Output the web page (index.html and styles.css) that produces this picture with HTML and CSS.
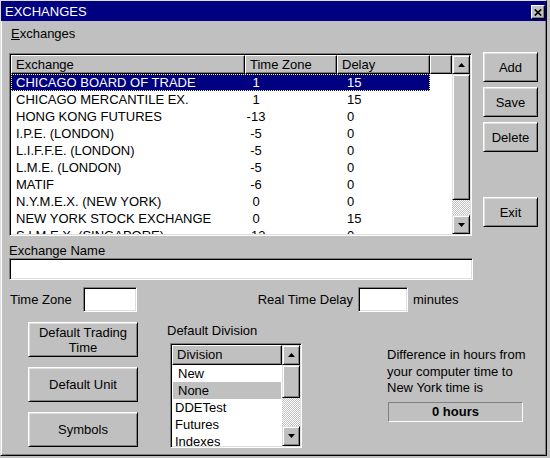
FILE: index.html
```html
<!DOCTYPE html>
<html>
<head>
<meta charset="utf-8">
<title>EXCHANGES</title>
<link rel="stylesheet" href="styles.css">
</head>
<body>
<div class="window">
  <div class="titlebar">
    <span class="title">EXCHANGES</span>
    <span class="close"><svg width="8" height="7" viewBox="0 0 8 7"><path d="M0.8 0.5 L7.2 6.5 M7.2 0.5 L0.8 6.5" stroke="#000" stroke-width="1.7" fill="none"/></svg></span>
  </div>
  <div class="menubar"><span><u>E</u>xchanges</span></div>

  <div class="top">
    <div class="listview sunken">
      <div class="lv-cols">
        <div class="lv-head">
          <div class="hcell">Exchange</div>
          <div class="hcell">Time Zone</div>
          <div class="hcell">Delay</div>
          <div class="hcell"></div>
        </div>
        <div class="lv-rows">
          <div class="row sel"><span class="c1">CHICAGO BOARD OF TRADE</span><span class="c2"><i>1</i></span><span class="c3">15</span></div>
          <div class="row"><span class="c1">CHICAGO MERCANTILE EX.</span><span class="c2"><i>1</i></span><span class="c3">15</span></div>
          <div class="row"><span class="c1">HONG KONG FUTURES</span><span class="c2"><i>-13</i></span><span class="c3">0</span></div>
          <div class="row"><span class="c1">I.P.E. (LONDON)</span><span class="c2"><i>-5</i></span><span class="c3">0</span></div>
          <div class="row"><span class="c1">L.I.F.F.E. (LONDON)</span><span class="c2"><i>-5</i></span><span class="c3">0</span></div>
          <div class="row"><span class="c1">L.M.E. (LONDON)</span><span class="c2"><i>-5</i></span><span class="c3">0</span></div>
          <div class="row"><span class="c1">MATIF</span><span class="c2"><i>-6</i></span><span class="c3">0</span></div>
          <div class="row"><span class="c1">N.Y.M.E.X. (NEW YORK)</span><span class="c2"><i>0</i></span><span class="c3">0</span></div>
          <div class="row"><span class="c1">NEW YORK STOCK EXCHANGE</span><span class="c2"><i>0</i></span><span class="c3">15</span></div>
          <div class="row"><span class="c1">S.I.M.E.X. (SINGAPORE)</span><span class="c2"><i>-13</i></span><span class="c3">0</span></div>
        </div>
      </div>
      <div class="vscroll main-scroll">
        <div class="sbtn raised"><svg width="7" height="4" viewBox="0 0 7 4"><polygon points="0,4 3.5,0 7,4" fill="#000"/></svg></div>
        <div class="thumb raised"></div>
        <div class="track"></div>
        <div class="sbtn raised"><svg width="7" height="4" viewBox="0 0 7 4"><polygon points="0,0 7,0 3.5,4" fill="#000"/></svg></div>
      </div>
    </div>
    <div class="side-buttons">
      <div class="btn">Add</div>
      <div class="btn">Save</div>
      <div class="btn">Delete</div>
      <div class="btn exit">Exit</div>
    </div>
  </div>

  <div class="name-label">Exchange Name</div>
  <div class="name-input sunken"></div>

  <div class="tz-row">
    <span class="tz-label">Time Zone</span>
    <span class="tz-input sunken"></span>
    <span class="rtd-label">Real Time Delay</span>
    <span class="rtd-input sunken"></span>
    <span class="minutes">minutes</span>
  </div>

  <div class="bottom">
    <div class="left-col">
      <div class="btn bbtn">Default Trading<br>Time</div>
      <div class="btn bbtn">Default Unit</div>
      <div class="btn bbtn">Symbols</div>
    </div>
    <div class="mid-col">
      <div class="dd-label">Default Division</div>
      <div class="division sunken">
        <div class="dv-cols">
          <div class="dv-head"><div class="hcell">Division</div></div>
          <div class="dv-rows">
            <div class="drow ind">New</div>
            <div class="drow ind dsel">None</div>
            <div class="drow">DDETest</div>
            <div class="drow">Futures</div>
            <div class="drow">Indexes</div>
          </div>
        </div>
        <div class="vscroll dv-scroll">
          <div class="sbtn raised"><svg width="7" height="4" viewBox="0 0 7 4"><polygon points="0,4 3.5,0 7,4" fill="#000"/></svg></div>
          <div class="thumb raised"></div>
          <div class="track"></div>
          <div class="sbtn raised"><svg width="7" height="4" viewBox="0 0 7 4"><polygon points="0,0 7,0 3.5,4" fill="#000"/></svg></div>
        </div>
      </div>
    </div>
    <div class="right-col">
      <div class="info">Difference in hours from<br>your computer time to<br>New York time is</div>
      <div class="hours">0 hours</div>
    </div>
  </div>
</div>
</body>
</html>
```

FILE: styles.css
```css
* { box-sizing: border-box; }

body {
  margin: 0;
  background: #c0c0c0;
  font-family: "Liberation Sans", Arial, sans-serif;
  font-size: 13px;
  color: #000;
}

.window {
  width: 547px;
  height: 456px;
  border: 1px solid;
  border-color: #dfdfdf #000 #000 #dfdfdf;
  box-shadow: inset 1px 1px #fff, inset -1px -1px #808080;
  display: flex;
  flex-direction: column;
  background: #c0c0c0;
}

.titlebar {
  height: 20px;
  flex: none;
  background: #000080;
  color: #fff;
  display: flex;
  justify-content: space-between;
  align-items: flex-start;
}

.title {
  padding: 2px 0 0 4px;
  line-height: 18px;
}

.close {
  width: 14px;
  height: 14px;
  margin: 4px 1px 0 0;
  background: #c0c0c0;
  border: 1px solid;
  border-color: #fff #000 #000 #fff;
  box-shadow: inset -1px -1px #808080;
  display: flex;
  align-items: center;
  justify-content: center;
}

.close svg { display: block; }

.menubar {
  padding: 5px 0 0 10px;
  line-height: 16px;
  height: 21px;
  flex: none;
}

.sunken {
  border: 1px solid;
  border-color: #808080 #fff #fff #808080;
  box-shadow: inset 1px 1px #000, inset -1px -1px #dfdfdf;
  background: #fff;
}

.raised {
  background: #c0c0c0;
  border: 1px solid;
  border-color: #dfdfdf #000 #000 #dfdfdf;
  box-shadow: inset 1px 1px #fff, inset -1px -1px #808080;
}

.btn {
  background: #c0c0c0;
  border: 1px solid;
  border-color: #fff #000 #000 #fff;
  box-shadow: inset 1px 1px #dfdfdf, inset -1px -1px #808080;
  display: flex;
  align-items: center;
  justify-content: center;
  text-align: center;
}

.top {
  display: flex;
  align-items: flex-start;
  margin-top: 11px;
  padding-left: 8px;
  flex: none;
}

.listview {
  width: 463px;
  height: 183px;
  padding: 1px;
  display: flex;
}

.lv-cols {
  width: 441px;
  display: flex;
  flex-direction: column;
  background: #fff;
}

.lv-head {
  display: grid;
  grid-template-columns: 234px 92px 93px 22px;
  height: 19px;
  flex: none;
}

.hcell {
  background: #c0c0c0;
  border: 1px solid;
  border-color: #fff #000 #000 #fff;
  box-shadow: inset -1px -1px #808080;
  padding-left: 4px;
  line-height: 17px;
  white-space: nowrap;
  overflow: hidden;
}

.lv-rows {
  flex: 1;
  overflow: hidden;
}

.row {
  display: grid;
  grid-template-columns: 234px 92px 93px;
  width: 419px;
  height: 17px;
  line-height: 17px;
  white-space: nowrap;
}

.row .c1 { padding-left: 5px; }
.row .c2 i {
  display: inline-block;
  width: 22px;
  text-align: center;
  font-style: normal;
}
.row .c3 { padding-left: 10px; }

.row.sel {
  background: #000080;
  color: #fff;
  outline: 1px dotted #ffff80;
  outline-offset: -1px;
}

.vscroll {
  width: 18px;
  display: flex;
  flex-direction: column;
}

.sbtn {
  display: flex;
  align-items: center;
  justify-content: center;
  flex: none;
}

.sbtn svg { display: block; }

.thumb { flex: none; }

.track {
  flex: 1;
  background: repeating-conic-gradient(#c0c0c0 0 25%, #fff 0 50%) 0 0 / 2px 2px;
}

.main-scroll .sbtn { height: 19px; }
.main-scroll .thumb { height: 126px; }

.side-buttons {
  margin-left: 11px;
  margin-top: -1px;
  width: 55px;
  display: flex;
  flex-direction: column;
  gap: 5px;
}

.side-buttons .btn { height: 30px; }
.side-buttons .exit { margin-top: 40px; }

.name-label {
  margin-top: 8px;
  padding-left: 8px;
  line-height: 14px;
  flex: none;
}

.name-input {
  margin-left: 8px;
  width: 464px;
  height: 22px;
  flex: none;
}

.tz-row {
  display: flex;
  align-items: center;
  margin-top: 7px;
  height: 25px;
  padding-left: 9px;
  white-space: nowrap;
  flex: none;
}

.tz-label { width: 73px; }
.tz-input { width: 54px; height: 25px; }
.rtd-label { width: 221px; text-align: right; padding-right: 5px; }
.rtd-input { width: 50px; height: 25px; }
.minutes { margin-left: 5px; }

.bottom {
  display: flex;
  align-items: flex-start;
  margin-top: 10px;
  flex: none;
}

.left-col {
  margin-left: 27px;
  width: 110px;
  display: flex;
  flex-direction: column;
  gap: 10px;
}

.bbtn {
  height: 35px;
  line-height: 15px;
}

.mid-col {
  margin-left: 29px;
}

.dd-label {
  margin-top: 1px;
  line-height: 16px;
  white-space: nowrap;
}

.division {
  margin-top: 4px;
  margin-left: 3px;
  width: 132px;
  height: 105px;
  padding: 1px;
  display: flex;
}

.dv-cols {
  width: 110px;
  display: flex;
  flex-direction: column;
  background: #fff;
}

.dv-head { height: 20px; display: flex; flex: none; }
.dv-head .hcell { flex: 1; line-height: 18px; }

.dv-rows { flex: 1; overflow: hidden; }

.drow {
  height: 17px;
  line-height: 17px;
  padding-left: 3px;
  white-space: nowrap;
}

.drow.ind { padding-left: 6px; }
.drow.dsel { background: #c0c0c0; margin-left: 1px; margin-right: 1px; padding-left: 5px; }

.dv-scroll .sbtn { height: 20px; }
.dv-scroll .thumb { height: 33px; }

.right-col {
  margin-left: 85px;
  white-space: nowrap;
}

.info {
  margin-top: 25px;
  line-height: 16.5px;
}

.hours {
  margin-top: 5.5px;
  margin-left: 1px;
  width: 135px;
  height: 20px;
  border: 1px solid;
  border-color: #808080 #fff #fff #808080;
  font-weight: bold;
  text-align: center;
  line-height: 18px;
}
```
